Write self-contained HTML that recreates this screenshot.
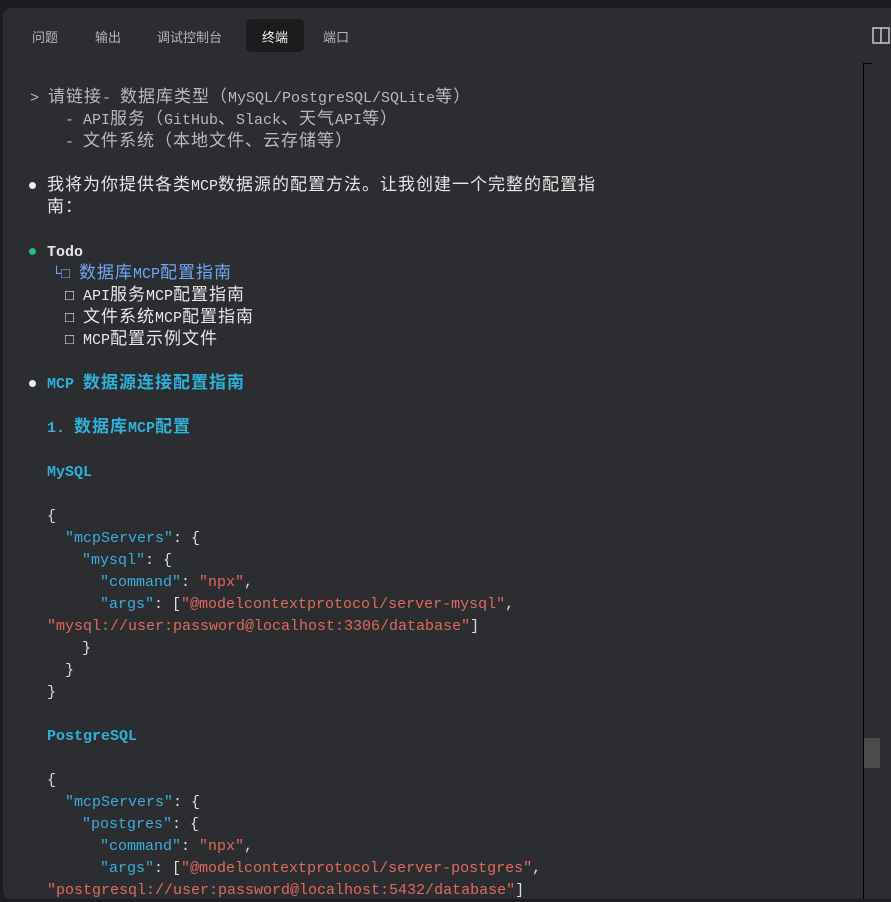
<!DOCTYPE html>
<html><head><meta charset="utf-8"><style>
html,body{margin:0;padding:0;}
body{width:891px;height:901px;background:#1d1d21;overflow:hidden;position:relative;font-family:"Liberation Sans","Noto Sans CJK SC",sans-serif;}
.panel{position:absolute;left:3px;top:8px;width:900px;height:891px;background:#2c2d31;border-radius:8px;}
.tab{position:absolute;top:27px;font-size:13px;color:#b4b4b8;}
.act{position:absolute;left:246px;top:19px;width:58px;height:33px;background:#1c1c1e;border-radius:5px;}
.term{position:absolute;left:0;top:88px;font-family:"Liberation Mono","Noto Sans CJK SC",monospace;font-size:15px;line-height:22px;color:#dcdcdc;white-space:pre;}
.l{position:absolute;height:22px;}
.z{font-family:"Noto Sans CJK SC",sans-serif;font-size:17px;letter-spacing:1px;line-height:0;}
.g{color:#b9b9b9}.c{color:#2fb0d8;font-weight:bold}.k{color:#3aaed8}.s{color:#e0685c}.b{color:#6ea6f2}.w{color:#e6e6e6}
.dot{position:absolute;width:7px;height:7px;border-radius:50%;left:29px;}
</style></head><body>
<div class="panel"></div>
<div class="act"></div>
<div class="tab" style="left:32px">问题</div>
<div class="tab" style="left:95px">输出</div>
<div class="tab" style="left:157px">调试控制台</div>
<div class="tab" style="left:262px;color:#f0f0f0">终端</div>
<div class="tab" style="left:323px">端口</div>
<svg style="position:absolute;left:872px;top:27px" width="18" height="17"><rect x="1" y="1" width="16" height="15" fill="none" stroke="#c8c8c8" stroke-width="1.5"/><line x1="9" y1="1" x2="9" y2="16" stroke="#c8c8c8" stroke-width="1.5"/></svg>
<div style="position:absolute;left:863px;top:63px;width:9px;height:1px;background:#000"></div>
<div style="position:absolute;left:863px;top:63px;width:1px;height:836px;background:#000"></div>
<div style="position:absolute;left:864px;top:738px;width:16px;height:30px;background:#4b4b4e"></div>
<div class="dot" style="top:182px;background:#eee"></div>
<div class="dot" style="top:248px;background:#1fbf78"></div>
<div class="dot" style="top:380px;background:#eee"></div>
<div class="term">
<div class="l g" style="left:30px;top:0">&gt; <span class="z">请链接</span>- <span class="z">数据库类型（</span>MySQL/PostgreSQL/SQLite<span class="z">等）</span></div>
<div class="l g" style="left:65px;top:22px">- API<span class="z">服务（</span>GitHub<span class="z">、</span>Slack<span class="z">、天气</span>API<span class="z">等）</span></div>
<div class="l g" style="left:65px;top:44px">- <span class="z">文件系统（本地文件、云存储等）</span></div>
<div class="l w" style="left:47px;top:88px"><span class="z">我将为你提供各类</span>MCP<span class="z">数据源的配置方法。让我创建一个完整的配置指</span></div>
<div class="l w" style="left:47px;top:110px"><span class="z">南：</span></div>
<div class="l w" style="left:47px;top:154px;font-weight:bold">Todo</div>
<div class="l b" style="left:52px;top:176px">└□ <span class="z">数据库</span>MCP<span class="z">配置指南</span></div>
<div class="l w" style="left:65px;top:198px">□ API<span class="z">服务</span>MCP<span class="z">配置指南</span></div>
<div class="l w" style="left:65px;top:220px">□ <span class="z">文件系统</span>MCP<span class="z">配置指南</span></div>
<div class="l w" style="left:65px;top:242px">□ MCP<span class="z">配置示例文件</span></div>
<div class="l c" style="left:47px;top:286px">MCP <span class="z">数据源连接配置指南</span></div>
<div class="l c" style="left:47px;top:330px">1. <span class="z">数据库</span>MCP<span class="z">配置</span></div>
<div class="l c" style="left:47px;top:374px">MySQL</div>
<div class="l" style="left:47px;top:418px">{</div>
<div class="l" style="left:65px;top:440px"><span class="k">"mcpServers"</span>: {</div>
<div class="l" style="left:82px;top:462px"><span class="k">"mysql"</span>: {</div>
<div class="l" style="left:100px;top:484px"><span class="k">"command"</span>: <span class="s">"npx"</span>,</div>
<div class="l" style="left:100px;top:506px"><span class="k">"args"</span>: [<span class="s">"@modelcontextprotocol/server-mysql"</span>,</div>
<div class="l" style="left:47px;top:528px"><span class="s">"mysql://user:password@localhost:3306/database"</span>]</div>
<div class="l" style="left:82px;top:550px">}</div>
<div class="l" style="left:65px;top:572px">}</div>
<div class="l" style="left:47px;top:594px">}</div>
<div class="l c" style="left:47px;top:638px">PostgreSQL</div>
<div class="l" style="left:47px;top:682px">{</div>
<div class="l" style="left:65px;top:704px"><span class="k">"mcpServers"</span>: {</div>
<div class="l" style="left:82px;top:726px"><span class="k">"postgres"</span>: {</div>
<div class="l" style="left:100px;top:748px"><span class="k">"command"</span>: <span class="s">"npx"</span>,</div>
<div class="l" style="left:100px;top:770px"><span class="k">"args"</span>: [<span class="s">"@modelcontextprotocol/server-postgres"</span>,</div>
<div class="l" style="left:47px;top:792px"><span class="s">"postgresql://user:password@localhost:5432/database"</span>]</div>
</div>
</body></html>
